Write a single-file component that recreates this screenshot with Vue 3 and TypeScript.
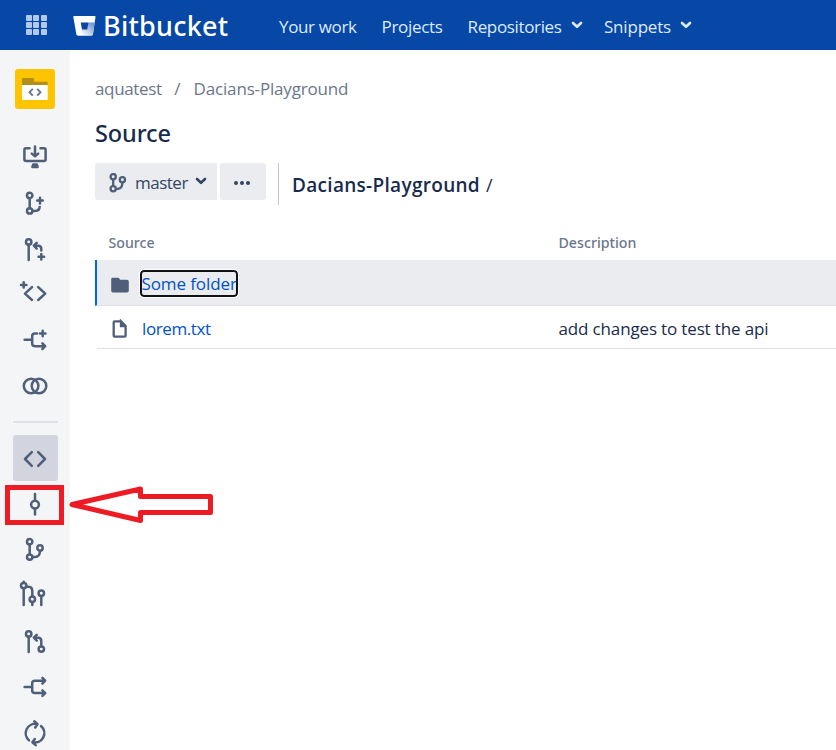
<script setup lang="ts">
interface RailItem {
  name: string
  paths: string[]
  circles?: [number, number, number][]
  active?: boolean
}

const dots = Array.from({ length: 9 }, (_, i) => i)

const createItems: RailItem[] = [
  {
    name: 'Clone',
    paths: [
      'M-5.5 -8.7H-9Q-10.6 -8.7 -10.6 -7.2V2.6Q-10.6 4 -9 4H9Q10.6 4 10.6 2.6V-7.2Q10.6 -8.7 9 -8.7H5.5',
      'M0 -10.5V-1M-3.2 -3.4L0 -.6L3.2 -3.4',
      'M-1.8 7.6H1.8L2.6 10H-2.6ZM-1.6 8.8H1.6',
    ],
  },
  {
    name: 'Create branch',
    paths: ['M-5.3 -4.6V5.2M-2.4 7.9H0Q4.5 7.9 4.7 3.9', 'M5 -5.2V.4M2.2 -2.4H7.8'],
    circles: [[-5.3, -7.5, 2.7], [-5.3, 7.9, 2.7]],
  },
  {
    name: 'Create pull request',
    paths: ['M-6.3 -4.2V11', 'M-1 -3.3H3.3Q6.3 -3.3 6.3 0V1.6M1.7 -6.2L-1.2 -3.3L1.7 -.4', 'M6.3 5V10.6M3.5 7.8H9.1'],
    circles: [[-6.3, -7, 2.7]],
  },
  {
    name: 'Create snippet',
    paths: ['M-3 -6.8L-10 -.4L-3 6M3.2 -6.8L10.2 -.4L3.2 6', 'M-11.3 -11.8V-6.4M-14 -9.1H-8.6'],
  },
  {
    name: 'Fork',
    paths: ['M-10.4 -.2H-2.8M2 -6.5H0Q-2.8 -6.5 -2.8 -4V3.6Q-2.8 6.2 0 6.2H10M7.4 3.4L10.2 6.2L7.4 9', 'M7.7 -9.3V-3.7M4.9 -6.5H10.5'],
  },
  {
    name: 'Compare',
    paths: [],
    circles: [[-3.9, 0, 7.3], [4, 0, 7.3]],
  },
]

const repoItems: RailItem[] = [
  { name: 'Source', paths: ['M-3.2 -5.8L-10 1L-3.2 7.8M3.2 -5.8L10 1L3.2 7.8'], active: true },
  { name: 'Commits', paths: ['M0 -10V-3.6M0 4.7V10.6'], circles: [[0, 0.6, 3.9]] },
  {
    name: 'Branches',
    paths: ['M-5.3 -4.4V5.2M-2.4 8.1H0Q4.8 8.1 5 2'],
    circles: [[-5.3, -7.3, 2.7], [-5.3, 8.1, 2.7], [5, -1, 2.7]],
  },
  {
    name: 'All pull requests',
    paths: ['M-11.3 -13.2V-12.4M-11.3 -6.6V10M-8.3 -8.2H-6.2Q-2.7 -8 -2.7 -3.6V1.4M-2.7 7.2V10M6.3 1.2V10'],
    circles: [[-11.3, -9.4, 2.7], [-2.7, 4.3, 2.7], [6.3, -1.7, 2.7]],
  },
  {
    name: 'Pull requests',
    paths: ['M-6.3 -4.2V11', 'M-1 -3.3H3.3Q6.3 -3.3 6.3 0V5.2M1.7 -6.2L-1.2 -3.3L1.7 -.4'],
    circles: [[-6.3, -7, 2.7], [6.3, 8.1, 2.7]],
  },
  {
    name: 'Forks',
    paths: ['M-10.4 0H-2.8M10 -6.3H0Q-2.8 -6.3 -2.8 -4V3.6Q-2.8 6.1 0 6.1H10M7.4 -9.1L10.2 -6.3L7.4 -3.5M7.4 3.3L10.2 6.1L7.4 8.9'],
  },
  {
    name: 'Pipelines',
    paths: ['M-6 7.4A9.4 9.4 0 0 1 2.2 -8.9M-.7 -11.7L2.6 -8.9L.2 -5.6', 'M6 -7A9.4 9.4 0 0 1 -2.2 9.3M.7 12.1L-2.6 9.3L-.2 6'],
  },
]

const groups: RailItem[][] = [createItems, repoItems]
</script>

<template>
  <div class="page">
    <header class="topbar">
      <div class="switcher"><i v-for="d in dots" :key="d"></i></div>
      <div class="brand">
        <svg class="bucket" width="24" height="22" viewBox="0 0 24 22">
          <defs>
            <linearGradient id="shade" x1="1" y1="0.2" x2="0.2" y2="0.9">
              <stop offset="0" stop-color="#6f95cf" />
              <stop offset="1" stop-color="#fff" />
            </linearGradient>
          </defs>
          <path d="M1 1H21.8Q22.6 1 22.5 1.9L19.9 19.6Q19.7 20.4 18.9 20.4H4.7Q3.6 20.4 3.4 19.4L.3 1.9Q.2 1 1 1Z" fill="#fff" />
          <path d="M15.3 7.5H21.6L19.9 19.6Q19.7 20.4 18.9 20.4H4.7L9.3 14H14Z" fill="url(#shade)" />
          <path d="M7.7 7.6H15.5L14.2 14.4H9Z" fill="#0747a6" />
        </svg>
        <span class="wordmark">Bitbucket</span>
      </div>
      <nav class="nav">
        <a class="work">Your work</a>
        <a class="projects">Projects</a>
        <a class="repos">Repositories</a>
        <svg class="chev" width="12" height="8" viewBox="0 0 12 8"><path d="M2 2L6 5.8L10 2" /></svg>
        <a class="snips">Snippets</a>
        <svg class="chev" width="12" height="8" viewBox="0 0 12 8"><path d="M2 2L6 5.8L10 2" /></svg>
      </nav>
    </header>

    <div class="body">
      <aside class="rail">
        <svg class="avatar" width="40" height="40" viewBox="0 0 40 40">
          <rect width="40" height="40" rx="3" fill="#ffc400" />
          <path d="M7 17V10Q7 9 8 9H18Q19 9 19 10V12.7H32Q32.7 12.7 32.7 13.5V17Z" fill="#b38f17" />
          <path d="M7 16H32.7V30Q32.7 31 31.7 31H8Q7 31 7 30Z" fill="#fff" />
          <path d="M17.8 19.8L14.5 23.2L17.8 26.6M22.2 19.8L25.5 23.2L22.2 26.6" fill="none" stroke="#6b778c" stroke-width="1.9" />
        </svg>
        <div v-for="(group, g) in groups" :key="g" class="group">
          <div v-for="item in group" :key="item.name" class="item" :class="{ active: item.active }">
            <svg width="45" height="46" viewBox="-22 -23 45 46">
              <path v-for="p in item.paths" :key="p" :d="p" />
              <circle v-for="(c, i) in item.circles" :key="i" :cx="c[0]" :cy="c[1]" :r="c[2]" />
            </svg>
          </div>
        </div>
      </aside>

      <main class="main">
        <div class="crumbs"><a>aquatest</a><span class="sep">/</span><a class="repo">Dacians-Playground</a></div>
        <h1>Source</h1>
        <div class="tools">
          <button class="branch">
            <svg width="18" height="20" viewBox="0 0 18 20">
              <path d="M4.2 6V13M7 15.8H9Q13.3 15.6 13.4 9.6" />
              <circle cx="4.2" cy="3.7" r="2.6" />
              <circle cx="4.2" cy="15.8" r="2.6" />
              <circle cx="13.4" cy="6.8" r="2.6" />
            </svg>
            <span>master</span>
            <svg class="chev dark" width="12" height="8" viewBox="0 0 12 8"><path d="M2 2L6 5.8L10 2" /></svg>
          </button>
          <button class="more"><i></i><i></i><i></i></button>
          <div class="path"><b>Dacians-Playground</b><span>/</span></div>
        </div>
        <div class="table">
          <div class="head"><span class="c1">Source</span><span class="c2">Description</span></div>
          <div class="row focused">
            <div class="c1">
              <svg width="20" height="20" viewBox="0 0 20 20"><path d="M1.2 4Q1.2 2.7 2.5 2.7H8Q9 2.7 9.4 3.6L10 4.8H17Q18.8 4.8 18.8 6.5V15.8Q18.8 17.5 17 17.5H3Q1.2 17.5 1.2 15.8Z" fill="#505f79" /></svg>
              <a class="ring">Some folder</a>
            </div>
          </div>
          <div class="row last">
            <div class="c1">
              <svg width="20" height="20" viewBox="0 0 20 20"><path d="M11 2.3H4.7Q3.7 2.3 3.7 3.3V16.7Q3.7 17.7 4.7 17.7H14.6Q15.6 17.7 15.6 16.7V7L11 2.3V7H15.6" fill="none" stroke="#505f79" stroke-width="2.3" /><path d="M11 2L16 7.4H11Z" fill="#505f79" /></svg>
              <a class="file">lorem.txt</a>
            </div>
            <span class="c2">add changes to test the api</span>
          </div>
        </div>
      </main>
    </div>

    <div class="callout"></div>
    <svg class="arrow" width="148" height="38" viewBox="0 0 148 38">
      <path d="M5 19.5L73.5 4V11.5H143.5V27.5H73.5V35.5L5 19.5Z" />
    </svg>
  </div>
</template>

<style>
body { margin: 0; background: #fff; }
</style>

<style scoped>
.page { position: relative; height: 750px; overflow: hidden; display: flex; flex-direction: column; font: 17px/24px "Open Sans", "Noto Sans", sans-serif; color: #172b4d; }
.topbar { height: 50px; flex: none; background: #0747a6; color: #deebff; display: flex; align-items: center; padding-left: 26px; box-sizing: border-box; }
.switcher { display: grid; grid-template-columns: repeat(3, 6px); grid-auto-rows: 6px; gap: 1.4px; width: 21px; }
.switcher i { background: #b1c8ed; border-radius: 1px; }
.brand { display: flex; align-items: center; margin-left: 26px; width: 206px; }
.bucket { margin-top: 1px; }
.wordmark { font: 500 27px/36px "Noto Sans", sans-serif; color: #fff; margin: 2px 0 0 6px; letter-spacing: .25px; }
.nav { display: flex; align-items: center; padding-top: 3px; white-space: nowrap; }
.nav a { flex: none; }
.work { width: 102.5px; letter-spacing: -.35px; }
.projects { width: 86px; letter-spacing: -.3px; }
.repos { width: 103.5px; letter-spacing: -.35px; }
.snips { width: 76px; margin-left: 21px; letter-spacing: -.2px; }
.chev { fill: none; stroke: #deebff; stroke-width: 2.6; stroke-linecap: round; stroke-linejoin: round; margin-top: -4px; flex: none; }
.chev.dark { stroke: #344563; margin-top: -2px; }

.body { flex: 1; display: flex; min-height: 0; }
.rail { width: 70px; flex: none; background: #f4f5f7; padding: 19px 12px 0 13px; box-sizing: border-box; overflow: hidden; }
.avatar { display: block; margin: 0 0 25px 2px; }
.item { height: 45.8px; width: 45px; border-radius: 3px; }
.item svg { display: block; fill: none; stroke: #505f79; stroke-width: 2.5; stroke-linecap: round; stroke-linejoin: round; }
.active { background: #d2d4de; }
.group + .group { margin-top: 12px; border-top: 2px solid #dfe1e6; padding-top: 12px; }

.main { flex: 1; min-width: 0; padding: 27px 0 0 25px; }
.crumbs { display: flex; color: #6b778c; letter-spacing: -.35px; }
.sep { margin: 0 13.5px 0 12.5px; }
.repo { letter-spacing: -.17px; }
h1 { margin: 17px 0 15px; font: 500 23.5px/30px "Noto Sans", sans-serif; letter-spacing: -.1px; }
.tools { display: flex; align-items: flex-start; height: 42px; }
button { border: 0; background: #ebecf0; height: 37px; padding: 0; font: inherit; color: #344563; display: flex; align-items: center; box-sizing: border-box; }
.branch { width: 122px; border-radius: 3px 0 0 3px; padding-left: 14px; letter-spacing: -.5px; }
.branch svg:first-child { fill: none; stroke: #505f79; stroke-width: 2.3; margin-top: 3px; flex: none; }
.branch span { width: 60px; margin-left: 8px; padding-top: 2px; text-align: left; }
.more { width: 46px; border-radius: 3px; margin-left: 3px; justify-content: center; gap: 2.4px; padding: 3px 2px 0 0; }
.more i { width: 4px; height: 4px; border-radius: 50%; background: #344563; }
.path { margin-left: 12px; border-left: 1px solid #c1c7d0; height: 42px; padding-left: 13px; display: flex; align-items: center; box-sizing: border-box; padding-top: 2px; white-space: nowrap; }
.path b { font-size: 19px; font-weight: 600; letter-spacing: .3px; }
.path span { margin-left: 6px; font-size: 18px; }

.table { margin-top: 25px; }
.head, .row { display: flex; align-items: center; box-sizing: border-box; white-space: nowrap; }
.head { height: 30px; padding: 0 0 4px 13.5px; color: #6b778c; font: 500 14.2px/22px "Noto Sans", sans-serif; }
.head .c1 { width: 450px; }
.row { height: 43px; border-bottom: 1px solid #dfe1e6; margin-left: 2px; padding-left: 12.5px; }
.row .c1 { width: 449px; display: flex; align-items: center; }
.row .c2 { letter-spacing: -.15px; }
.row a { color: #0052cc; letter-spacing: -.1px; margin-left: 12.5px; }
.row .file { letter-spacing: -.4px; }
.last { padding-top: 3px; }
.focused { height: 46px; background: #ebecf0; border-left: 2px solid #0065ff; margin-left: 0; padding-top: 4px; }
.row .ring { border: 2px solid #101214; border-radius: 4px; margin: -3px 0 0 10px; line-height: 24px; height: 23px; width: 94px; outline: 1px solid #fff; }

.callout { position: absolute; left: 5px; top: 485px; width: 59px; height: 40px; box-sizing: border-box; border: 5px solid #ed1c24; }
.arrow { position: absolute; left: 67px; top: 485px; fill: none; stroke: #ed1c24; stroke-width: 5; stroke-linejoin: round; }
</style>
